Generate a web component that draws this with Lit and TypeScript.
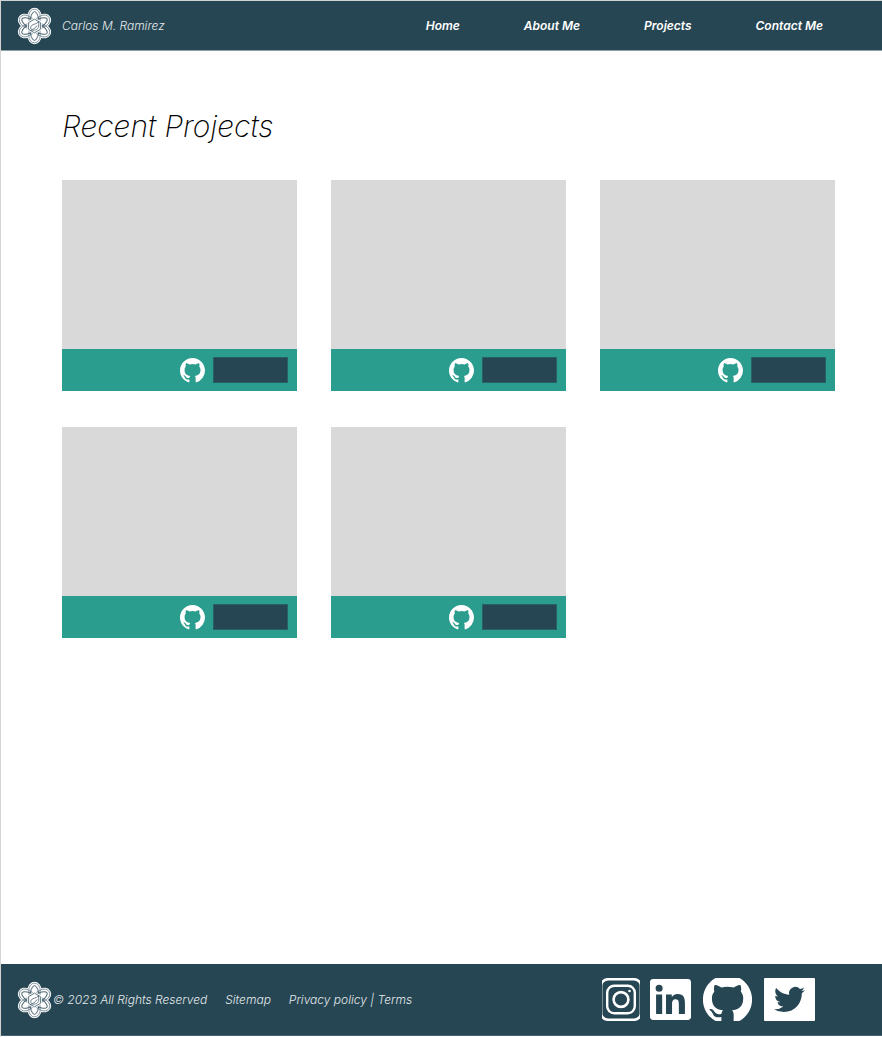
import { LitElement, html, css, svg } from "lit";
import { customElement } from "lit/decorators.js";

const GITHUB_PATH =
  "M8 0C3.58 0 0 3.58 0 8c0 3.54 2.29 6.53 5.47 7.59.4.07.55-.17.55-.38 0-.19-.01-.82-.01-1.49-2.01.37-2.53-.49-2.69-.94-.09-.23-.48-.94-.82-1.13-.28-.15-.68-.52-.01-.53.63-.01 1.08.58 1.23.82.72 1.21 1.87.87 2.33.66.07-.52.28-.87.51-1.07-1.78-.2-3.64-.89-3.64-3.95 0-.87.31-1.59.82-2.15-.08-.2-.36-1.02.08-2.12 0 0 .67-.21 2.2.82a7.6 7.6 0 0 1 4 0c1.53-1.04 2.2-.82 2.2-.82.44 1.1.16 1.92.08 2.12.51.56.82 1.27.82 2.15 0 3.07-1.87 3.75-3.65 3.95.29.25.54.73.54 1.48 0 1.07-.01 1.93-.01 2.2 0 .21.15.46.55.38A8.01 8.01 0 0 0 16 8c0-4.42-3.58-8-8-8z";

@customElement("atom-logo")
export class AtomLogo extends LitElement {
  static styles = css`
    :host { display: block; width: 35px; height: 38px; }
    svg { display: block; width: 100%; height: 100%; }
  `;

  render() {
    const turns = [0, 60, 120];
    const loop = (rx: number, ry: number, fill: string, stroke: string, width: number) =>
      turns.map(
        (a) => svg`<rect x=${-rx} y=${-ry} width=${rx * 2} height=${ry * 2} rx=${rx} ry=${rx * 1.15}
          fill=${fill} stroke=${stroke} stroke-width=${width} transform="rotate(${a})"></rect>`
      );
    const orbit = (rx: number, ry: number, width: number) =>
      turns.map(
        (a) => svg`<ellipse rx=${rx} ry=${ry} fill="none" stroke="#4d6672"
          stroke-width=${width} transform="rotate(${a})"></ellipse>`
      );
    return html`
      <svg viewBox="-17.5 -19 35 38" aria-hidden="true">
        ${loop(7, 18.2, "#fff", "none", 0)}
        ${loop(5.6, 16.8, "none", "#5b7480", 0.7)}
        ${orbit(4.8, 14.4, 1)}
        <path d="M0-8.4 7.3-4.2V4.2L0 8.4-7.3 4.2V-4.2Z" fill="#fff"></path>
        <path d="M0-6.8 5.9-3.4V3.4L0 6.8-5.9 3.4V-3.4Z" fill="none" stroke="#4d6672" stroke-width="0.9"></path>
        <path d="M3.8-4.4C4.8 0 4.2 4-.5 4.2-4.8 4.3-4.6-.2-1.4-1.4 1-2.3 3-2.4 3.8-4.4ZM-4.3 4.9C-2 3.6 1.2 2 2.6-.6"
          fill="none" stroke="#4d6672" stroke-width="0.8"></path>
      </svg>
    `;
  }
}

@customElement("project-card")
export class ProjectCard extends LitElement {
  static styles = css`
    :host { display: block; }
    .preview { aspect-ratio: 235 / 169; background: #d9d9d9; }
    .bar {
      display: flex;
      align-items: center;
      justify-content: flex-end;
      gap: 8px;
      height: 42px;
      padding-right: 9px;
      background: #2a9d8f;
    }
    .repo { display: block; width: 25px; height: 25px; }
    .repo svg { display: block; width: 100%; height: 100%; fill: #fff; }
    .open {
      width: 75px;
      height: 26px;
      padding: 0;
      border: 1px solid #276068;
      background: #264653;
      cursor: pointer;
    }
  `;

  render() {
    return html`
      <article>
        <div class="preview"></div>
        <div class="bar">
          <a class="repo" href="#" aria-label="GitHub repository">
            <svg viewBox="0 0 16 16"><path d=${GITHUB_PATH}></path></svg>
          </a>
          <button class="open" type="button" aria-label="Open project"></button>
        </div>
      </article>
    `;
  }
}

@customElement("app-root")
export class AppRoot extends LitElement {
  static styles = css`
    :host {
      display: flex;
      flex-direction: column;
      box-sizing: border-box;
      min-height: 100vh;
      padding-bottom: 1px;
      border-top: 1px solid #d0d3d3;
      border-left: 1px solid #d4d4d4;
      background: #fff;
      color: #000;
      font-family: Inter, "Liberation Sans", sans-serif;
      font-size: 12px;
      font-style: italic;
      font-weight: 300;
      line-height: 16px;
    }
    a { color: inherit; text-decoration: none; }
    header, footer {
      display: flex;
      align-items: center;
      padding-left: 16px;
      background: #264653;
      color: #e4e9eb;
    }
    header {
      height: 49px;
      padding-right: 59px;
      border-bottom: 1px solid #8fa0a7;
    }
    .brand { display: flex; align-items: center; gap: 10px; }
    nav {
      display: flex;
      gap: 64px;
      margin-left: auto;
      color: #fff;
      font-weight: 600;
    }
    main { flex: 1; padding: 55px 47px 48px 61px; }
    h1 {
      margin: 0 0 34px;
      font-size: 30px;
      font-weight: 250;
      line-height: 40px;
    }
    .grid {
      display: grid;
      grid-template-columns: repeat(3, 1fr);
      gap: 36px 34px;
    }
    footer {
      height: 71px;
      padding-right: 67px;
      border-bottom: 1px solid #4a6471;
    }
    .legal { display: flex; align-items: center; gap: 18px; }
    .rights { display: flex; align-items: center; gap: 1px; }
    .social {
      display: flex;
      align-items: center;
      gap: 10px;
      margin-left: auto;
    }
    .social a, .social svg { display: block; }
    .social .round { padding: 0 2px; }
  `;

  render() {
    return html`
      <header>
        <div class="brand"><atom-logo></atom-logo><span>Carlos M. Ramirez</span></div>
        <nav>
          <a href="#">Home</a>
          <a href="#">About Me</a>
          <a href="#">Projects</a>
          <a href="#">Contact Me</a>
        </nav>
      </header>
      <main>
        <h1>Recent Projects</h1>
        <section class="grid">
          ${[1, 2, 3, 4, 5].map(() => html`<project-card></project-card>`)}
        </section>
      </main>
      <footer>
        <div class="legal">
          <div class="rights"><atom-logo></atom-logo><span>© 2023 All Rights Reserved</span></div>
          <a href="#">Sitemap</a>
          <span><a href="#">Privacy policy</a> | <a href="#">Terms</a></span>
        </div>
        <div class="social">
          <a href="#" aria-label="Instagram">
            <svg width="38" height="43" viewBox="0 0 38 43" fill="none" stroke="#fff">
              <rect x="-1.6" y="1.2" width="41.2" height="40.6" rx="8" stroke-width="2.6"></rect>
              <path d="M.5 5V38M37.5 5V38" stroke-width="1" stroke-opacity="0.4"></path>
              <rect x="5.2" y="7.7" width="27.6" height="27.6" rx="7" stroke-width="2.4"></rect>
              <circle cx="19" cy="21.5" r="7.4" stroke-width="2.6"></circle>
              <circle cx="27.5" cy="13" r="1.3" fill="#fff" stroke="none"></circle>
            </svg>
          </a>
          <a href="#" aria-label="LinkedIn">
            <svg width="41" height="41" viewBox="0 0 24 24" fill="#fff">
              <path d="M20.447 20.452h-3.554v-5.569c0-1.328-.027-3.037-1.852-3.037-1.853 0-2.136 1.445-2.136 2.939v5.667H9.351V9h3.414v1.561h.046c.477-.9 1.637-1.85 3.37-1.85 3.601 0 4.267 2.37 4.267 5.455v6.286zM5.337 7.433a2.062 2.062 0 1 1 0-4.125 2.062 2.062 0 0 1 0 4.125zm1.782 13.019H3.555V9h3.564v11.452zM22.225 0H1.771C.792 0 0 .774 0 1.729v20.542C0 23.227.792 24 1.771 24h20.451C23.2 24 24 23.227 24 22.271V1.729C24 .774 23.2 0 22.222 0h.003z"></path>
            </svg>
          </a>
          <a class="round" href="#" aria-label="GitHub">
            <svg width="49" height="43" viewBox="0 1 16 14" fill="#fff" preserveAspectRatio="xMidYMid slice">
              <path d=${GITHUB_PATH}></path>
            </svg>
          </a>
          <a href="#" aria-label="Twitter">
            <svg width="51" height="43" viewBox="0 0 51 43">
              <rect width="51" height="43" rx="1" fill="#fff"></rect>
              <path transform="translate(10 6) scale(1.29)" fill="#264653"
                d="M23.953 4.57a10 10 0 0 1-2.825.775 4.958 4.958 0 0 0 2.163-2.723c-.951.555-2.005.959-3.127 1.184a4.92 4.92 0 0 0-8.384 4.482C7.69 8.095 4.067 6.13 1.64 3.162a4.822 4.822 0 0 0-.666 2.475c0 1.71.87 3.213 2.188 4.096a4.904 4.904 0 0 1-2.228-.616v.06a4.923 4.923 0 0 0 3.946 4.827 4.996 4.996 0 0 1-2.212.085 4.936 4.936 0 0 0 4.604 3.417 9.867 9.867 0 0 1-6.102 2.105c-.39 0-.779-.023-1.17-.067a13.995 13.995 0 0 0 7.557 2.209c9.053 0 13.998-7.496 13.998-13.985 0-.21 0-.42-.015-.63a9.935 9.935 0 0 0 2.46-2.548l-.047-.02z"></path>
            </svg>
          </a>
        </div>
      </footer>
    `;
  }
}
